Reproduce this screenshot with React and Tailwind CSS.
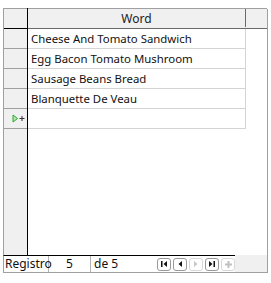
import React from "react";

const rows = [
  "Cheese And Tomato Sandwich",
  "Egg Bacon Tomato Mushroom",
  "Sausage Beans Bread",
  "Blanquette De Veau",
];

function NavBtn({ children, disabled }) {
  return (
    <div
      className={
        "w-[14px] h-[13px] rounded-[3px] border flex items-center justify-center bg-white " +
        (disabled ? "border-[#d8d8d8]" : "border-[#9a9a9a]")
      }
    >
      {children}
    </div>
  );
}

export default function App() {
  return (
    <div className="w-[271px] h-[283px] bg-white font-['Segoe_UI','Noto_Sans',sans-serif] text-[12px] text-black leading-none">
      <div className="pt-[8px] pl-[3px]">
        <div className="w-[265px] h-[265px] pr-px flex flex-col relative">
          <div className="absolute right-0 top-[1px] bottom-0 w-px bg-[#a0a0a0]" />
          <div className="flex flex-1 min-h-0">
            {/* row header column */}
            <div className="w-[25px] bg-[#f0f0f0] border-l border-[#a0a0a0] border-r border-r-black flex flex-col">
              <div className="h-[21px] border-t border-t-[#a0a0a0] border-b border-b-black" />
              {rows.map((r) => (
                <div key={r} className="h-[20px] border-b border-[#a0a0a0]" />
              ))}
              <div className="h-[20px] border-b border-[#a0a0a0] flex items-center pl-[8px]">
                <svg width="13" height="9" viewBox="0 0 13 9">
                  <path d="M1 1 L5.5 4.5 L1 8 Z" fill="#b8e6b0" stroke="#2ea82e" strokeWidth="1" />
                  <path d="M7.5 4.5 H12.5 M10 2 V7" stroke="#333" strokeWidth="1" />
                </svg>
              </div>
              <div className="flex-1" />
            </div>
            {/* data column */}
            <div className="flex-1 flex flex-col">
              <div className="h-[21px] bg-[#f0f0f0] border-t border-[#a0a0a0] border-b border-b-[#6a6a6a] flex">
                <div className="w-[218px] flex items-center justify-center relative pr-px">
                  <span className="text-[#222]">Word</span>
                  <div className="absolute right-0 top-0 bottom-[1px] w-px bg-[#6a6a6a]" />
                </div>
              </div>
              {rows.map((r) => (
                <div
                  key={r}
                  className="w-[218px] h-[20px] border-b border-r border-[#d4d4d4] flex items-center pl-[3px] text-[11.4px] text-[#111]"
                >
                  {r}
                </div>
              ))}
              <div className="w-[218px] h-[20px] border-b border-r border-[#d4d4d4]" />
              <div className="flex-1" />
            </div>
          </div>
          {/* nav bar */}
          <div className="h-[18px] flex border-b border-[#a0a0a0]">
            <div className="w-[232px] border-t border-black border-l border-l-[#a0a0a0] flex items-center text-[12px] text-[#111]">
              <div className="w-[45px] h-full flex items-center pl-[1px] border-r border-[#b4b4b4]">
                Registro
              </div>
              <div className="w-[42px] h-full flex items-center justify-center border-r border-[#b4b4b4]">
                5
              </div>
              <div className="w-[64px] h-full flex items-center pl-[3px]">de 5</div>
              <div className="flex items-center gap-[2px] pl-[2px]">
                <NavBtn>
                  <svg width="6" height="6" viewBox="0 0 6 6">
                    <rect x="0" y="0" width="1.5" height="6" fill="#111" />
                    <path d="M6 0 L2.5 3 L6 6 Z" fill="#111" />
                  </svg>
                </NavBtn>
                <NavBtn>
                  <svg width="4" height="6" viewBox="0 0 4 6">
                    <path d="M4 0 L0.5 3 L4 6 Z" fill="#111" />
                  </svg>
                </NavBtn>
                <NavBtn disabled>
                  <svg width="4" height="6" viewBox="0 0 4 6">
                    <path d="M0 0 L3.5 3 L0 6 Z" fill="#c8c8c8" />
                  </svg>
                </NavBtn>
                <NavBtn>
                  <svg width="6" height="6" viewBox="0 0 6 6">
                    <path d="M0 0 L3.5 3 L0 6 Z" fill="#111" />
                    <rect x="4.5" y="0" width="1.5" height="6" fill="#111" />
                  </svg>
                </NavBtn>
                <NavBtn disabled>
                  <svg width="7" height="7" viewBox="0 0 7 7">
                    <path d="M2.5 0 H4.5 V2.5 H7 V4.5 H4.5 V7 H2.5 V4.5 H0 V2.5 H2.5 Z" fill="#c0c0c0" />
                  </svg>
                </NavBtn>
              </div>
            </div>
            <div className="flex-1 bg-[#f0f0f0]" />
          </div>
        </div>
      </div>
    </div>
  );
}
